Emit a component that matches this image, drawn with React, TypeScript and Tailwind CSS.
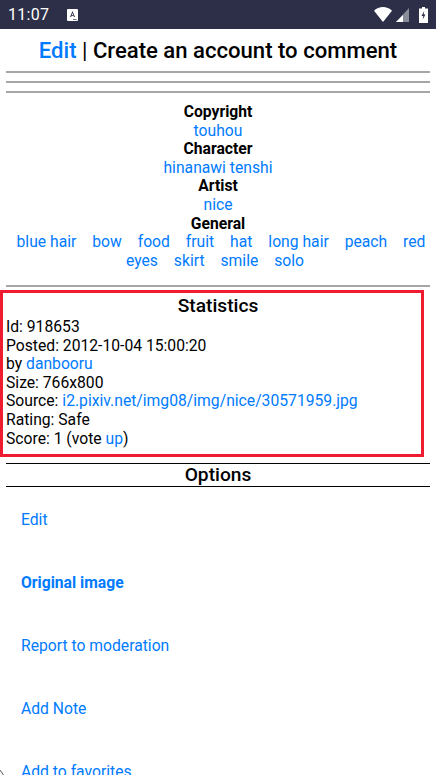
const link = "text-[#007bff]"

function StatusBar() {
  return (
    <div className="flex h-[29px] shrink-0 items-center justify-between bg-[#2d2f48] pl-2 pr-[8px] text-white">
      <div className="flex items-center">
        <span className="w-[41px] text-[16px] leading-none tracking-[0.3px]">11:07</span>
        <svg width="11" height="12" viewBox="0 0 11 12" className="ml-[18px]">
          <path d="M1 0h9a1 1 0 0 1 1 1v10a1 1 0 0 1-1 1H1a1 1 0 0 1-1-1V1a1 1 0 0 1 1-1Z" fill="#fff" />
          <path d="M5.500 2 3 8h1.100l.4-1.200h2L6.900 8H8L5.500 2Zm-.7 3.900.7-2 .7 2H4.800Z" fill="#2d2f48" />
          <path d="M6 10h3.500v.7H6Z" fill="#2d2f48" />
        </svg>
      </div>
      <div className="flex items-center">
        <svg width="18" height="15" viewBox="0 0 18 15">
          <path d="M0 3.700C5-1.200 13-1.200 18 3.700L9 15Z" fill="#fff" />
        </svg>
        <svg width="13" height="14" viewBox="0 0 13 14" className="ml-[4px] mt-[1px]">
          <path d="M13 0v14H0Z" fill="#8b8c9a" />
          <path d="M7 7v7H0Z" fill="#fff" />
        </svg>
        <svg width="9" height="16" viewBox="0 0 9 16" className="ml-[10px]">
          <path d="M3 0h3v1.500h3V16H0V1.500h3Z" fill="#fff" />
          <path d="M5.200 4 2.500 9h1.800l-.6 3.500L6.500 7.500H4.700Z" fill="#2d2f48" />
        </svg>
      </div>
    </div>
  )
}

function Rule() {
  return <hr className="mx-[6px] border-0 border-t-2 border-t-[#a6a6a6]" />
}

function TagLine({ children }: { children: React.ReactNode }) {
  return <div className="h-[18.600px]">{children}</div>
}

function OptionLink({ label, bold }: { label: string; bold?: boolean }) {
  return (
    <div className={`flex h-[63px] shrink-0 items-center pl-[21px] ${link} ${bold ? "font-bold" : ""}`}>
      {label}
    </div>
  )
}

export default function App() {
  const tagsBefore = ["blue hair", "bow", "food", "fruit", "hat", "long hair", "peach"]
  const tagsAfter = ["skirt", "smile", "solo"]

  return (
    <div className="relative flex h-[775px] w-[436px] flex-col overflow-hidden bg-white font-['Roboto',sans-serif] text-[15.700px] leading-[18.600px] text-black">
      <StatusBar />

      <h1 className="mt-[7px] h-[28px] shrink-0 whitespace-nowrap text-center text-[22.100px] font-medium leading-[28px]">
        <span className={link}>Edit</span> <span className="font-normal">|</span> Create an account to comment
      </h1>

      <div className="mt-[7px] flex flex-col gap-[8px]">
        <Rule />
        <Rule />
        <Rule />
      </div>

      <div className="mt-[10px] px-[6px] text-center">
        <TagLine><b className="font-bold">Copyright</b></TagLine>
        <TagLine><span className={link}>touhou</span></TagLine>
        <TagLine><b className="font-bold">Character</b></TagLine>
        <TagLine><span className={link}>hinanawi tenshi</span></TagLine>
        <TagLine><b className="font-bold">Artist</b></TagLine>
        <TagLine><span className={link}>nice</span></TagLine>
        <TagLine><b className="font-bold">General</b></TagLine>
        <div className={link}>
          {tagsBefore.map((tag) => (
            <span key={tag}>
              <span className="px-[6px]">{tag}</span>{" "}
            </span>
          ))}
          {/* "red eyes" breaks over the two lines */}
          <span className="pl-[6px]">red</span> <span className="pr-[6px]">eyes</span>{" "}
          {tagsAfter.map((tag) => (
            <span key={tag}>
              <span className="px-[6px]">{tag}</span>{" "}
            </span>
          ))}
        </div>
      </div>

      <div className="mt-[15px]">
        <Rule />
      </div>

      <div className="mt-[2.600px] mr-[12px] h-[167px] shrink-0 border-[3px] border-[#ee1c2e] pl-[3px]">
        <h2 className="-mr-[9px] mt-[1px] mb-[1px] text-center text-[19.200px] font-medium leading-[23px]">Statistics</h2>
        <div>Id: 918653</div>
        <div>Posted: 2012-10-04 15:00:20</div>
        <div>by <span className={link}>danbooru</span></div>
        <div>Size: 766x800</div>
        <div>Source: <span className={link}>i2.pixiv.net/img08/img/nice/30571959.jpg</span></div>
        <div>Rating: Safe</div>
        <div>Score: 1 (vote <span className={link}>up</span>)</div>
      </div>

      <h2 className="mx-[6px] mt-[6px] h-[24px] shrink-0 border-y border-black text-center text-[19.200px] font-medium leading-[21px]">Options</h2>

      <div className="mt-[1.400px]">
        <OptionLink label="Edit" />
        <OptionLink label="Original image" bold />
        <OptionLink label="Report to moderation" />
        <OptionLink label="Add Note" />
        <OptionLink label="Add to favorites" />
      </div>

      {/* little mark in the bottom left corner */}
      <svg width="4" height="5" viewBox="0 0 4 5" className="absolute bottom-0 left-0">
        <path d="M0 0 3.500 5" stroke="#555" strokeWidth="1" fill="none" />
      </svg>
    </div>
  )
}
